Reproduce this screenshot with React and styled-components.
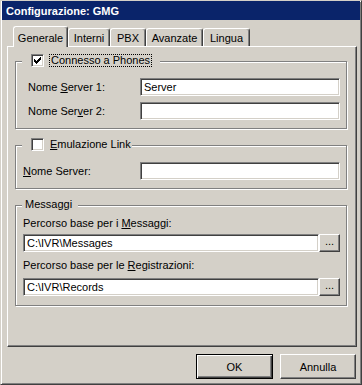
import React from 'react'
import styled, { createGlobalStyle } from 'styled-components'

const GlobalStyle = createGlobalStyle`
  * {
    box-sizing: border-box;
  }
  body {
    margin: 0;
    background: #d4d0c8;
    font-family: 'Liberation Sans', Arial, sans-serif;
    font-size: 11px;
    color: #000;
  }
`

const Window = styled.div`
  width: 362px;
  height: 385px;
  display: flex;
  flex-direction: column;
  background: #d4d0c8;
  border: 1px solid;
  border-color: #d4d0c8 #404040 #404040 #d4d0c8;
  box-shadow: inset 1px 1px #fff, inset -1px -1px #808080;
  padding: 0 1px 1px 1px;
`

const TitleBar = styled.div`
  height: 19px;
  display: flex;
  align-items: center;
  padding-left: 4px;
  background: #0a246a;
  color: #fff;
  font-weight: bold;
`

const Body = styled.div`
  display: flex;
  flex-direction: column;
  padding: 6px 3px 0 5px;
`

const TabStrip = styled.div`
  display: flex;
  align-items: flex-end;
  height: 20px;
  padding-left: 6px;
`

const Tab = styled.div`
  position: relative;
  width: ${p => p.$width}px;
  height: ${p => (p.$active ? 21 : 18)}px;
  margin-bottom: ${p => (p.$active ? -1 : 0)}px;
  z-index: ${p => (p.$active ? 1 : 0)};
  padding-top: ${p => (p.$active ? 5 : 3)}px;
  line-height: 13px;
  text-align: center;
  background: #d4d0c8;
  border-top: 1px solid #fff;
  border-left: 1px solid #fff;
  border-right: 1px solid #404040;
  border-radius: 3px 3px 0 0;
  box-shadow: inset -1px 0 #808080;
`

const Panel = styled.div`
  height: 301px;
  display: flex;
  flex-direction: column;
  border: 1px solid;
  border-color: #fff #404040 #404040 #fff;
  box-shadow: inset -1px -1px #808080;
  padding: 14px 9px 0 7px;
`

const Group = styled.div`
  position: relative;
  display: flex;
  flex-direction: column;
  margin-top: ${p => p.$top || 0}px;
  padding: ${p => p.$pad};
  border: 1px solid #808080;
  box-shadow: 1px 1px #fff, inset 1px 1px #fff;
`

const GroupTitle = styled.div`
  position: absolute;
  top: -8px;
  left: 6px;
  width: ${p => p.$width}px;
  height: 13px;
  display: flex;
  align-items: center;
  padding-left: ${p => p.$indent}px;
  line-height: 13px;
  background: #d4d0c8;
`

const CheckBox = styled.div`
  flex: none;
  width: 13px;
  height: 13px;
  background: #fff;
  border: 1px solid;
  border-color: #808080 #fff #fff #808080;
  box-shadow: inset 1px 1px #404040, inset -1px -1px #d4d0c8;

  svg {
    display: block;
  }
`

const CheckText = styled.span`
  margin-left: ${p => (p.$focused ? 5 : 6)}px;
  padding: 0 ${p => (p.$focused ? 1 : 0)}px;
  line-height: 11px;
  border: ${p => (p.$focused ? '1px dotted #000' : 'none')};
`

const Row = styled.div`
  display: flex;
  align-items: center;
  justify-content: space-between;
  margin-top: ${p => p.$top || 0}px;
`

const Label = styled.div`
  line-height: 11px;
  margin-top: ${p => p.$top || 0}px;
`

const Key = styled.span`
  text-decoration: underline;
  text-underline-offset: 1px;
`

const Field = styled.input`
  width: ${p => (p.$width ? `${p.$width}px` : 'auto')};
  flex: ${p => (p.$width ? 'none' : '1')};
  min-width: 0;
  height: 18px;
  margin: 0;
  padding: 0 3px;
  font: inherit;
  color: #000;
  background: #fff;
  border: 1px solid;
  border-color: #808080 #fff #fff #808080;
  box-shadow: inset 1px 1px #404040, inset -1px -1px #d4d0c8;
  outline: none;
`

const PathRow = styled.div`
  display: flex;
  margin-top: ${p => p.$top || 0}px;
`

const BrowseButton = styled.button`
  flex: none;
  width: 21px;
  height: 18px;
  margin: 0;
  padding: 0 0 3px 0;
  font: inherit;
  line-height: 11px;
  background: #d4d0c8;
  border: 1px solid;
  border-color: #fff #404040 #404040 #fff;
  box-shadow: inset -1px -1px #808080;
`

const Footer = styled.div`
  display: flex;
  justify-content: flex-end;
  gap: 7px;
  margin-top: 7px;
  padding-right: 1px;
`

const Button = styled.button`
  width: ${p => p.$width}px;
  height: 25px;
  margin: 0;
  padding: 0;
  font: inherit;
  color: #000;
  background: #d4d0c8;
  border: 1px solid;
  border-color: ${p => (p.$default ? '#000' : '#fff #404040 #404040 #fff')};
  box-shadow: ${p =>
    p.$default
      ? 'inset 1px 1px #fff, inset -1px -1px #404040, inset -2px -2px #808080'
      : 'inset -1px -1px #808080'};
`

const tabs = [
  { name: 'Generale', width: 55, active: true },
  { name: 'Interni', width: 42 },
  { name: 'PBX', width: 36 },
  { name: 'Avanzate', width: 57 },
  { name: 'Lingua', width: 47 }
]

const Check = () => (
  <svg width="11" height="11" viewBox="0 0 11 11" shapeRendering="crispEdges">
    <path
      d="M2 4h1v3h-1z M3 5h1v3h-1z M4 6h1v3h-1z M5 5h1v3h-1z M6 4h1v3h-1z M7 3h1v3h-1z M8 2h1v3h-1z"
      fill="#000"
    />
  </svg>
)

export default function App() {
  return (
    <Window>
      <GlobalStyle />
      <TitleBar>Configurazione: GMG</TitleBar>
      <Body>
        <TabStrip>
          {tabs.map(t => (
            <Tab key={t.name} $width={t.width} $active={t.active}>
              {t.name}
            </Tab>
          ))}
        </TabStrip>
        <Panel>
          <Group $pad="16px 6px 8px 12px">
            <GroupTitle $width={138} $indent={9}>
              <CheckBox>
                <Check />
              </CheckBox>
              <CheckText $focused>Connesso a Phones</CheckText>
            </GroupTitle>
            <Row>
              <Label>
                Nome <Key>S</Key>erver 1:
              </Label>
              <Field $width={200} defaultValue="Server" />
            </Row>
            <Row $top={6}>
              <Label>
                Nome Ser<Key>v</Key>er 2:
              </Label>
              <Field $width={200} defaultValue="" />
            </Row>
          </Group>

          <Group $top={16} $pad="16px 6px 8px 7px">
            <GroupTitle $width={110} $indent={9}>
              <CheckBox />
              <CheckText>
                <Key>E</Key>mulazione Link
              </CheckText>
            </GroupTitle>
            <Row>
              <Label>
                <Key>N</Key>ome Server:
              </Label>
              <Field $width={200} defaultValue="" />
            </Row>
          </Group>

          <Group $top={16} $pad="12px 6px 9px 7px">
            <GroupTitle $width={56} $indent={3}>
              Messaggi
            </GroupTitle>
            <Label>
              Percorso base per i <Key>M</Key>essaggi:
            </Label>
            <PathRow $top={5}>
              <Field defaultValue="C:\IVR\Messages" />
              <BrowseButton>...</BrowseButton>
            </PathRow>
            <Label $top={8}>
              Percorso base per le <Key>R</Key>egistrazioni:
            </Label>
            <PathRow $top={7}>
              <Field defaultValue="C:\IVR\Records" />
              <BrowseButton>...</BrowseButton>
            </PathRow>
          </Group>
        </Panel>
        <Footer>
          <Button $width={77} $default>
            OK
          </Button>
          <Button $width={76}>Annulla</Button>
        </Footer>
      </Body>
    </Window>
  )
}
